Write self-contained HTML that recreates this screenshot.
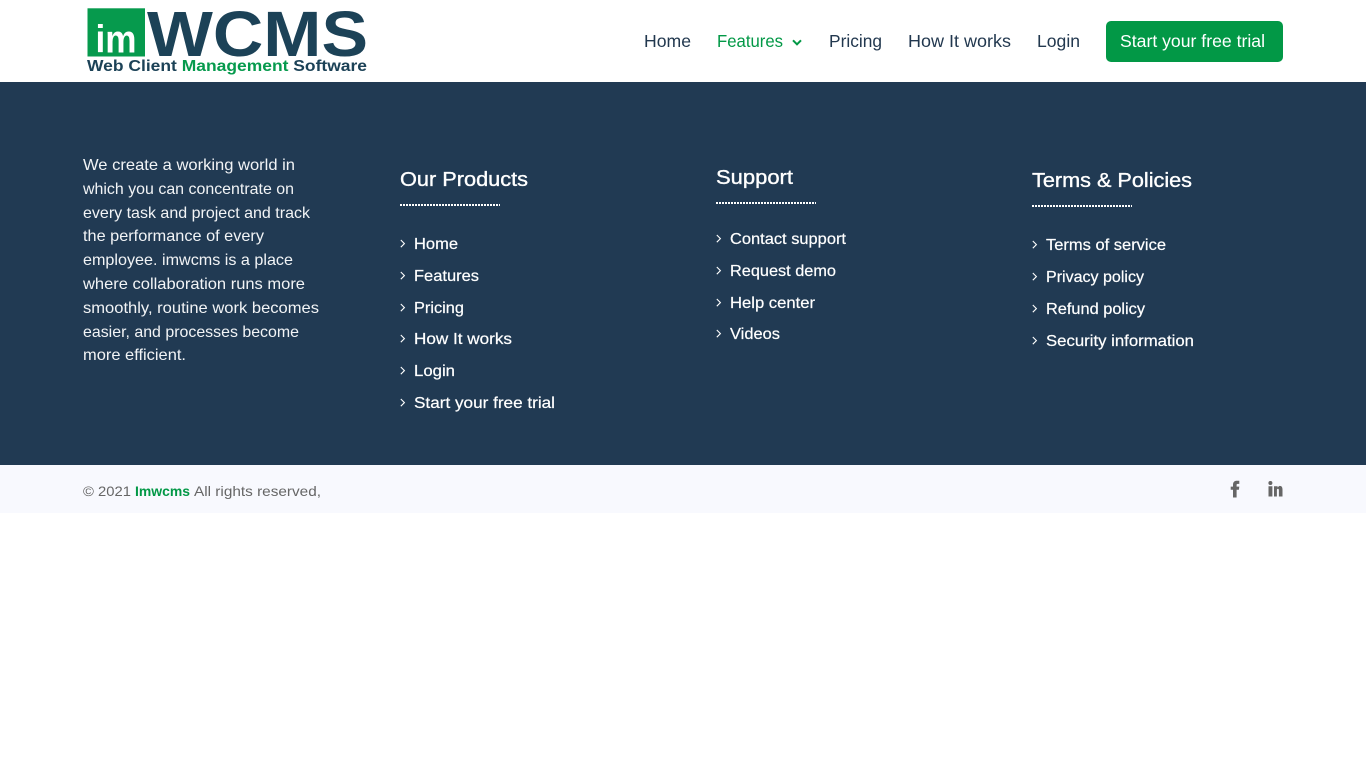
<!DOCTYPE html>
<html lang="en">
<head>
<meta charset="utf-8">
<title>imWCMS</title>
<style>
html,body{margin:0;padding:0;background:#fff;width:1366px;height:768px;overflow:hidden}
svg{display:block}
text{font-family:"Liberation Sans",sans-serif;white-space:pre}
.nav{font-size:17.5px;fill:#22384f}
.p{font-size:15.6px;fill:#f2f4f6}
.h{font-size:20px;fill:#fff;stroke:#fff;stroke-width:.35px}
.l{font-size:15.6px;fill:#fff;stroke:#fff;stroke-width:.2px}
.c{font-size:14px;fill:#666}
.chev{fill:none;stroke:#fff;stroke-width:1.1}
.dots{stroke:#fff;stroke-width:2;stroke-dasharray:2 1}
</style>
</head>
<body>
<svg width="1366" height="768" viewBox="0 0 1366 768" xmlns="http://www.w3.org/2000/svg">
<rect width="1366" height="768" fill="#fff"/>

<!-- Header logo -->
<rect x="87.5" y="8.3" width="57.5" height="48.2" fill="#069a4d"/>
<text x="95.500" y="52.500" font-size="39" font-weight="700" fill="#fff" textLength="41" lengthAdjust="spacingAndGlyphs">im</text>
<text x="147" y="56" font-size="64" font-weight="700" fill="#1c4257" textLength="221" lengthAdjust="spacingAndGlyphs">WCMS</text>
<text x="87" y="71" font-size="15.5" font-weight="700" fill="#1c4257" textLength="280" lengthAdjust="spacingAndGlyphs">Web Client <tspan fill="#069a4d">Management</tspan> Software</text>

<!-- Header nav -->
<text class="nav" x="644" y="47" textLength="47" lengthAdjust="spacingAndGlyphs">Home</text>
<text class="nav" x="717" y="47" textLength="66" lengthAdjust="spacingAndGlyphs" style="fill:#029846">Features</text>
<path d="M793 40.300l4 4 4-4" fill="none" stroke="#029846" stroke-width="2"/>
<text class="nav" x="829" y="47" textLength="53" lengthAdjust="spacingAndGlyphs">Pricing</text>
<text class="nav" x="908" y="47" textLength="103" lengthAdjust="spacingAndGlyphs">How It works</text>
<text class="nav" x="1037" y="47" textLength="43" lengthAdjust="spacingAndGlyphs">Login</text>
<rect x="1106" y="21" width="177" height="41" rx="5" fill="#029846"/>
<text class="nav" x="1120" y="47" textLength="145" lengthAdjust="spacingAndGlyphs" style="fill:#fff">Start your free trial</text>

<!-- Footer -->
<rect y="82" width="1366" height="383" fill="#213a53"/>

<text class="p" x="83" y="170" textLength="212" lengthAdjust="spacingAndGlyphs">We create a working world in</text>
<text class="p" x="83" y="194" textLength="211" lengthAdjust="spacingAndGlyphs">which you can concentrate on</text>
<text class="p" x="83" y="218" textLength="227" lengthAdjust="spacingAndGlyphs">every task and project and track</text>
<text class="p" x="83" y="241" textLength="181" lengthAdjust="spacingAndGlyphs">the performance of every</text>
<text class="p" x="83" y="265" textLength="210" lengthAdjust="spacingAndGlyphs">employee. imwcms is a place</text>
<text class="p" x="83" y="289" textLength="222" lengthAdjust="spacingAndGlyphs">where collaboration runs more</text>
<text class="p" x="83" y="313" textLength="236" lengthAdjust="spacingAndGlyphs">smoothly, routine work becomes</text>
<text class="p" x="83" y="337" textLength="216" lengthAdjust="spacingAndGlyphs">easier, and processes become</text>
<text class="p" x="83" y="360" textLength="103" lengthAdjust="spacingAndGlyphs">more efficient.</text>

<!-- Our Products -->
<text class="h" x="400" y="186" textLength="128" lengthAdjust="spacingAndGlyphs">Our Products</text>
<line class="dots" x1="400" y1="205" x2="500" y2="205"/>
<path class="chev" d="M400.8 240l3.6 3.6-3.6 3.6M400.8 272l3.6 3.6-3.6 3.6M400.8 304l3.6 3.6-3.6 3.6M400.8 335l3.6 3.6-3.6 3.6M400.8 367l3.6 3.6-3.6 3.6M400.8 399l3.6 3.6-3.6 3.6"/>
<text class="l" x="414" y="249" textLength="44" lengthAdjust="spacingAndGlyphs">Home</text>
<text class="l" x="414" y="281" textLength="65" lengthAdjust="spacingAndGlyphs">Features</text>
<text class="l" x="414" y="313" textLength="50" lengthAdjust="spacingAndGlyphs">Pricing</text>
<text class="l" x="414" y="344" textLength="98" lengthAdjust="spacingAndGlyphs">How It works</text>
<text class="l" x="414" y="376" textLength="41" lengthAdjust="spacingAndGlyphs">Login</text>
<text class="l" x="414" y="408" textLength="141" lengthAdjust="spacingAndGlyphs">Start your free trial</text>

<!-- Support -->
<text class="h" x="716" y="184" textLength="77" lengthAdjust="spacingAndGlyphs">Support</text>
<line class="dots" x1="716" y1="203" x2="816" y2="203"/>
<path class="chev" d="M716.8 235l3.6 3.6-3.6 3.6M716.8 267l3.6 3.6-3.6 3.6M716.8 299l3.6 3.6-3.6 3.6M716.8 330l3.6 3.6-3.6 3.6"/>
<text class="l" x="730" y="244" textLength="116" lengthAdjust="spacingAndGlyphs">Contact support</text>
<text class="l" x="730" y="276" textLength="106" lengthAdjust="spacingAndGlyphs">Request demo</text>
<text class="l" x="730" y="308" textLength="85" lengthAdjust="spacingAndGlyphs">Help center</text>
<text class="l" x="730" y="339" textLength="50" lengthAdjust="spacingAndGlyphs">Videos</text>

<!-- Terms -->
<text class="h" x="1032" y="187" textLength="160" lengthAdjust="spacingAndGlyphs">Terms &amp; Policies</text>
<line class="dots" x1="1032" y1="206" x2="1132" y2="206"/>
<path class="chev" d="M1032.8 241l3.6 3.6-3.6 3.6M1032.8 273l3.6 3.6-3.6 3.6M1032.8 305l3.6 3.6-3.6 3.6M1032.8 337l3.6 3.6-3.6 3.6"/>
<text class="l" x="1046" y="250" textLength="120" lengthAdjust="spacingAndGlyphs">Terms of service</text>
<text class="l" x="1046" y="282" textLength="98" lengthAdjust="spacingAndGlyphs">Privacy policy</text>
<text class="l" x="1046" y="314" textLength="99" lengthAdjust="spacingAndGlyphs">Refund policy</text>
<text class="l" x="1046" y="346" textLength="148" lengthAdjust="spacingAndGlyphs">Security information</text>

<!-- Bottom bar -->
<rect y="465" width="1366" height="48" fill="#f8f9fe"/>
<text class="c" x="83" y="496" textLength="48" lengthAdjust="spacingAndGlyphs">© 2021</text>
<text class="c" x="135" y="496" textLength="55" lengthAdjust="spacingAndGlyphs" font-weight="700" style="fill:#029846">Imwcms</text>
<text class="c" x="194" y="496" textLength="127" lengthAdjust="spacingAndGlyphs">All rights reserved,</text>

<path d="M1233 497.500v-7.700h-2.300v-3.200h2.300v-1.900c0-2.700 1.500-4 3.900-4h2.400v3.200h-1.500c-.9 0-1.200.4-1.200 1.200v1.500h2.700l-.4 3.200h-2.300v7.700z" fill="#666"/>
<path d="M1268.500 486.200h3.900v10.300h-3.900zM1270.400 481a2 2 0 1 1 0 4 2 2 0 0 1 0-4zM1274 496.500V486.200h3.600v1.400c.7-1.100 1.700-1.700 2.200-1.700 1.800 0 2.700 1.400 2.700 3.600v7h-3.600v-6.200c0-1-.4-1.600-1-1.600-.7 0-1 .6-1 1.600v6.200z" fill="#666"/>
</svg>
</body>
</html>
